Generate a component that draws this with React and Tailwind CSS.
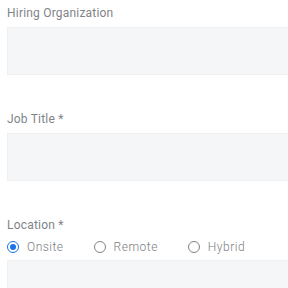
export default function App() {
    const options = ['Onsite', 'Remote', 'Hybrid'];
    const selected = 'Onsite';

    return (
        <div className="w-[288px] h-[288px] overflow-hidden bg-white pl-[7px] pt-[4px]" style={{ fontFamily: 'Roboto, "Liberation Sans", sans-serif' }}>
            <div className="mb-[35px]">
                <label className="block text-[12px] leading-[18px] tracking-[0.2px] text-[#7f8488]">Hiring Organization</label>
                <div className="mt-[5px] h-[48px] w-[300px] bg-[#f5f6f7] border border-[#eef0f1]"></div>
            </div>

            <div className="mb-[35px]">
                <label className="block text-[12px] leading-[18px] tracking-[0.2px] text-[#7f8488]">Job Title *</label>
                <div className="mt-[5px] h-[48px] w-[300px] bg-[#f5f6f7] border border-[#eef0f1]"></div>
            </div>

            <div>
                <label className="block text-[12px] leading-[18px] tracking-[0.2px] text-[#7f8488]">Location *</label>
                <div className="mt-[5px] flex items-center gap-[30px] h-[16px]">
                    {options.map(opt => (
                        <div key={opt} className="flex items-center gap-[8px]">
                            {opt === selected ? (
                                <span className="w-[12px] h-[12px] rounded-full border-[1.5px] border-[#1a73e8] flex items-center justify-center">
                                    <span className="w-[6px] h-[6px] rounded-full bg-[#1a73e8]"></span>
                                </span>
                            ) : (
                                <span className="w-[12px] h-[12px] rounded-full border-[1.3px] border-[#7f8387]"></span>
                            )}
                            <span className="text-[12px] leading-[16px] font-light tracking-[0.5px] text-[#7a7e82]">{opt}</span>
                        </div>
                    ))}
                </div>
                <div className="mt-[5px] h-[48px] w-[300px] bg-[#f5f6f7] border border-[#eef0f1]"></div>
            </div>
        </div>
    );
}
